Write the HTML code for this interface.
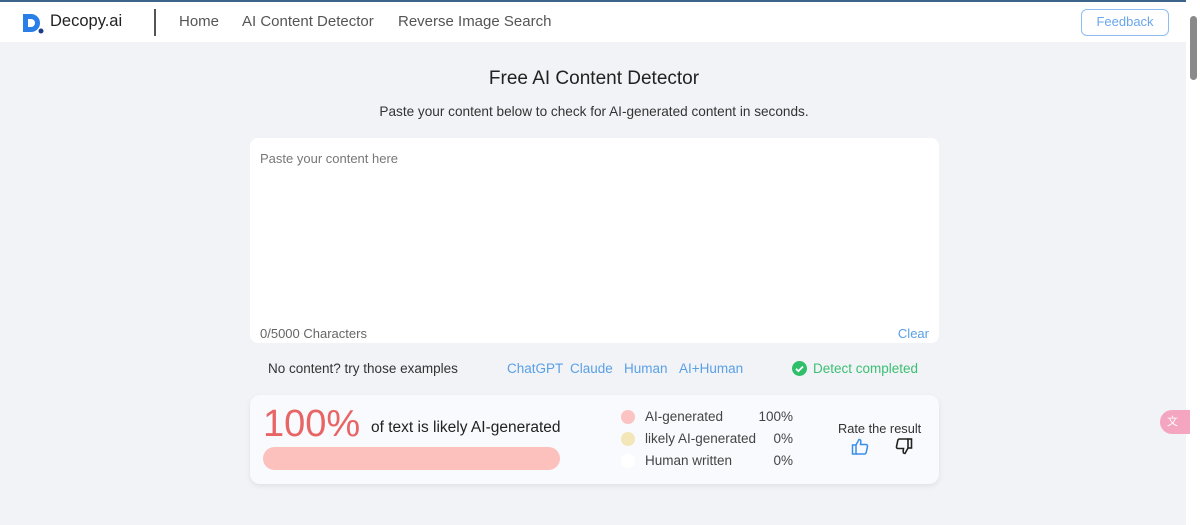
<!DOCTYPE html>
<html><head><meta charset="utf-8"><style>
*{margin:0;padding:0;box-sizing:border-box}
body{width:1200px;height:525px;overflow:hidden;background:#f1f3f7;font-family:"Liberation Sans","Noto Sans CJK SC",sans-serif;position:relative;color:#333}
.top{position:absolute;left:0;top:0;width:1200px;height:2px;background:#3c6488}
.hdr{position:absolute;left:0;top:2px;width:1186px;height:40px;background:#fff}
.logo{position:absolute;left:21px;top:10px;width:24px;height:22px}
.brand{position:absolute;left:50px;top:10px;font-size:16.5px;color:#222}
.sep{position:absolute;left:154px;top:7px;width:1.5px;height:27px;background:#555}
.nav{position:absolute;top:11px;font-size:15px;color:#555}
.fb{position:absolute;left:1081px;top:7px;width:88px;height:27px;border:1.5px solid #8fbdf2;border-radius:6px;color:#6aa6ec;font-size:13px;text-align:center;line-height:24px}
.sb{position:absolute;left:1186px;top:0;width:14px;height:525px;background:#fff}
.thumb{position:absolute;left:1190px;top:16px;width:7px;height:64px;background:#8a8a8a;border-radius:4px}
h1{position:absolute;left:0;width:1188px;top:68px;text-align:center;font-size:19px;font-weight:normal;color:#222}
.sub{position:absolute;left:0;width:1188px;top:104px;text-align:center;font-size:13.6px;color:#333}
.ta{position:absolute;left:250px;top:138px;width:689px;height:205px;background:#fff;border-radius:8px}
.ph{position:absolute;left:10px;top:13px;font-size:13px;color:#777}
.cnt{position:absolute;left:10px;top:188px;font-size:13px;color:#666}
.clr{position:absolute;right:10px;top:188px;font-size:13px;color:#5aa0e6}
.ex{position:absolute;top:361px;font-size:13.5px}
.blue{color:#5aa0e6}
.res{position:absolute;left:250px;top:395px;width:689px;height:89px;background:#f8fafd;border-radius:10px;box-shadow:0 2px 6px rgba(0,0,0,.08)}
.big{position:absolute;left:13px;top:8px;font-size:38px;color:#e86565}
.lk{position:absolute;left:121px;top:24px;font-size:15.5px;color:#222}
.bar{position:absolute;left:13px;top:52px;width:297px;height:23px;background:#fcc0bd;border-radius:12px}
.dot{position:absolute;left:371px;width:14px;height:14px;border-radius:50%}
.lg{position:absolute;left:395px;font-size:13.5px;color:#444;margin-top:-1px}
.pc{position:absolute;right:146px;font-size:13.5px;color:#444;margin-top:-1px}
.rate{position:absolute;left:588px;top:26px;font-size:12.8px;color:#333}
.tr{position:absolute;left:1160px;top:410px;width:30px;height:24px;background:#f4a6c0;border-radius:12px 0 0 12px;color:#fff;font-size:11px;line-height:24px;padding-left:7px}
</style></head><body>
<div class="top"></div>
<div class="hdr">
<svg class="logo" viewBox="0 0 24 22"><path d="M2 2h8a9 9 0 0 1 0 18H2z" fill="#2a7ee8"/><path d="M7 7h3a4 4 0 0 1 0 8H7z" fill="#fff"/><circle cx="20" cy="19" r="2.5" fill="#1a3e8a"/></svg>
<div class="brand">Decopy.ai</div>
<div class="sep"></div>
<div class="nav" style="left:179px">Home</div>
<div class="nav" style="left:242px">AI Content Detector</div>
<div class="nav" style="left:398px">Reverse Image Search</div>
<div class="fb">Feedback</div>
</div>
<div class="sb"></div><div class="thumb"></div>
<h1>Free AI Content Detector</h1>
<div class="sub">Paste your content below to check for AI-generated content in seconds.</div>
<div class="ta"><div class="ph">Paste your content here</div><div class="cnt">0/5000 Characters</div><div class="clr">Clear</div></div>
<div class="ex" style="left:268px;color:#333">No content? try those examples</div>
<div class="ex blue" style="left:507px">ChatGPT</div>
<div class="ex blue" style="left:570px">Claude</div>
<div class="ex blue" style="left:624px">Human</div>
<div class="ex blue" style="left:679px">AI+Human</div>
<svg style="position:absolute;left:792px;top:361px" width="15" height="15" viewBox="0 0 15 15"><circle cx="7.5" cy="7.5" r="7.5" fill="#2fbf6a"/><path d="M4 7.8l2.4 2.3 4.6-4.6" stroke="#fff" stroke-width="1.8" fill="none"/></svg>
<div class="ex" style="left:813px;color:#3cbf72">Detect completed</div>
<div class="res">
<div class="big">100%</div>
<div class="lk">of text is likely AI-generated</div>
<div class="bar"></div>
<div class="dot" style="top:15px;background:#fbc3c1"></div><div class="lg" style="top:15px">AI-generated</div><div class="pc" style="top:15px">100%</div>
<div class="dot" style="top:37px;background:#f3e6b8"></div><div class="lg" style="top:37px">likely AI-generated</div><div class="pc" style="top:37px">0%</div>
<div class="dot" style="top:59px;background:#fff"></div><div class="lg" style="top:59px">Human written</div><div class="pc" style="top:59px">0%</div>
<div class="rate">Rate the result</div>
<svg style="position:absolute;left:601px;top:43px" width="18" height="18" viewBox="0 0 18 18" fill="none" stroke="#3a8ee8" stroke-width="1.5"><rect x="1.5" y="7" width="3.5" height="9"/><path d="M5 7l3-5.5c1.5 0 2 1 1.8 2.5L9.5 6.5H15c1 0 1.7.8 1.5 1.8l-1.3 6.2c-.2.9-.9 1.5-1.8 1.5H5"/></svg>
<svg style="position:absolute;left:645px;top:42px" width="18" height="18" viewBox="0 0 18 18" fill="none" stroke="#222" stroke-width="1.6"><rect x="13" y="2" width="3.5" height="9"/><path d="M13 11l-3 5.5c-1.5 0-2-1-1.8-2.5L8.5 11.5H3c-1 0-1.7-.8-1.5-1.8L2.8 3.5C3 2.6 3.7 2 4.6 2H13"/></svg>
</div>
<div class="tr">文</div>
</body></html>
